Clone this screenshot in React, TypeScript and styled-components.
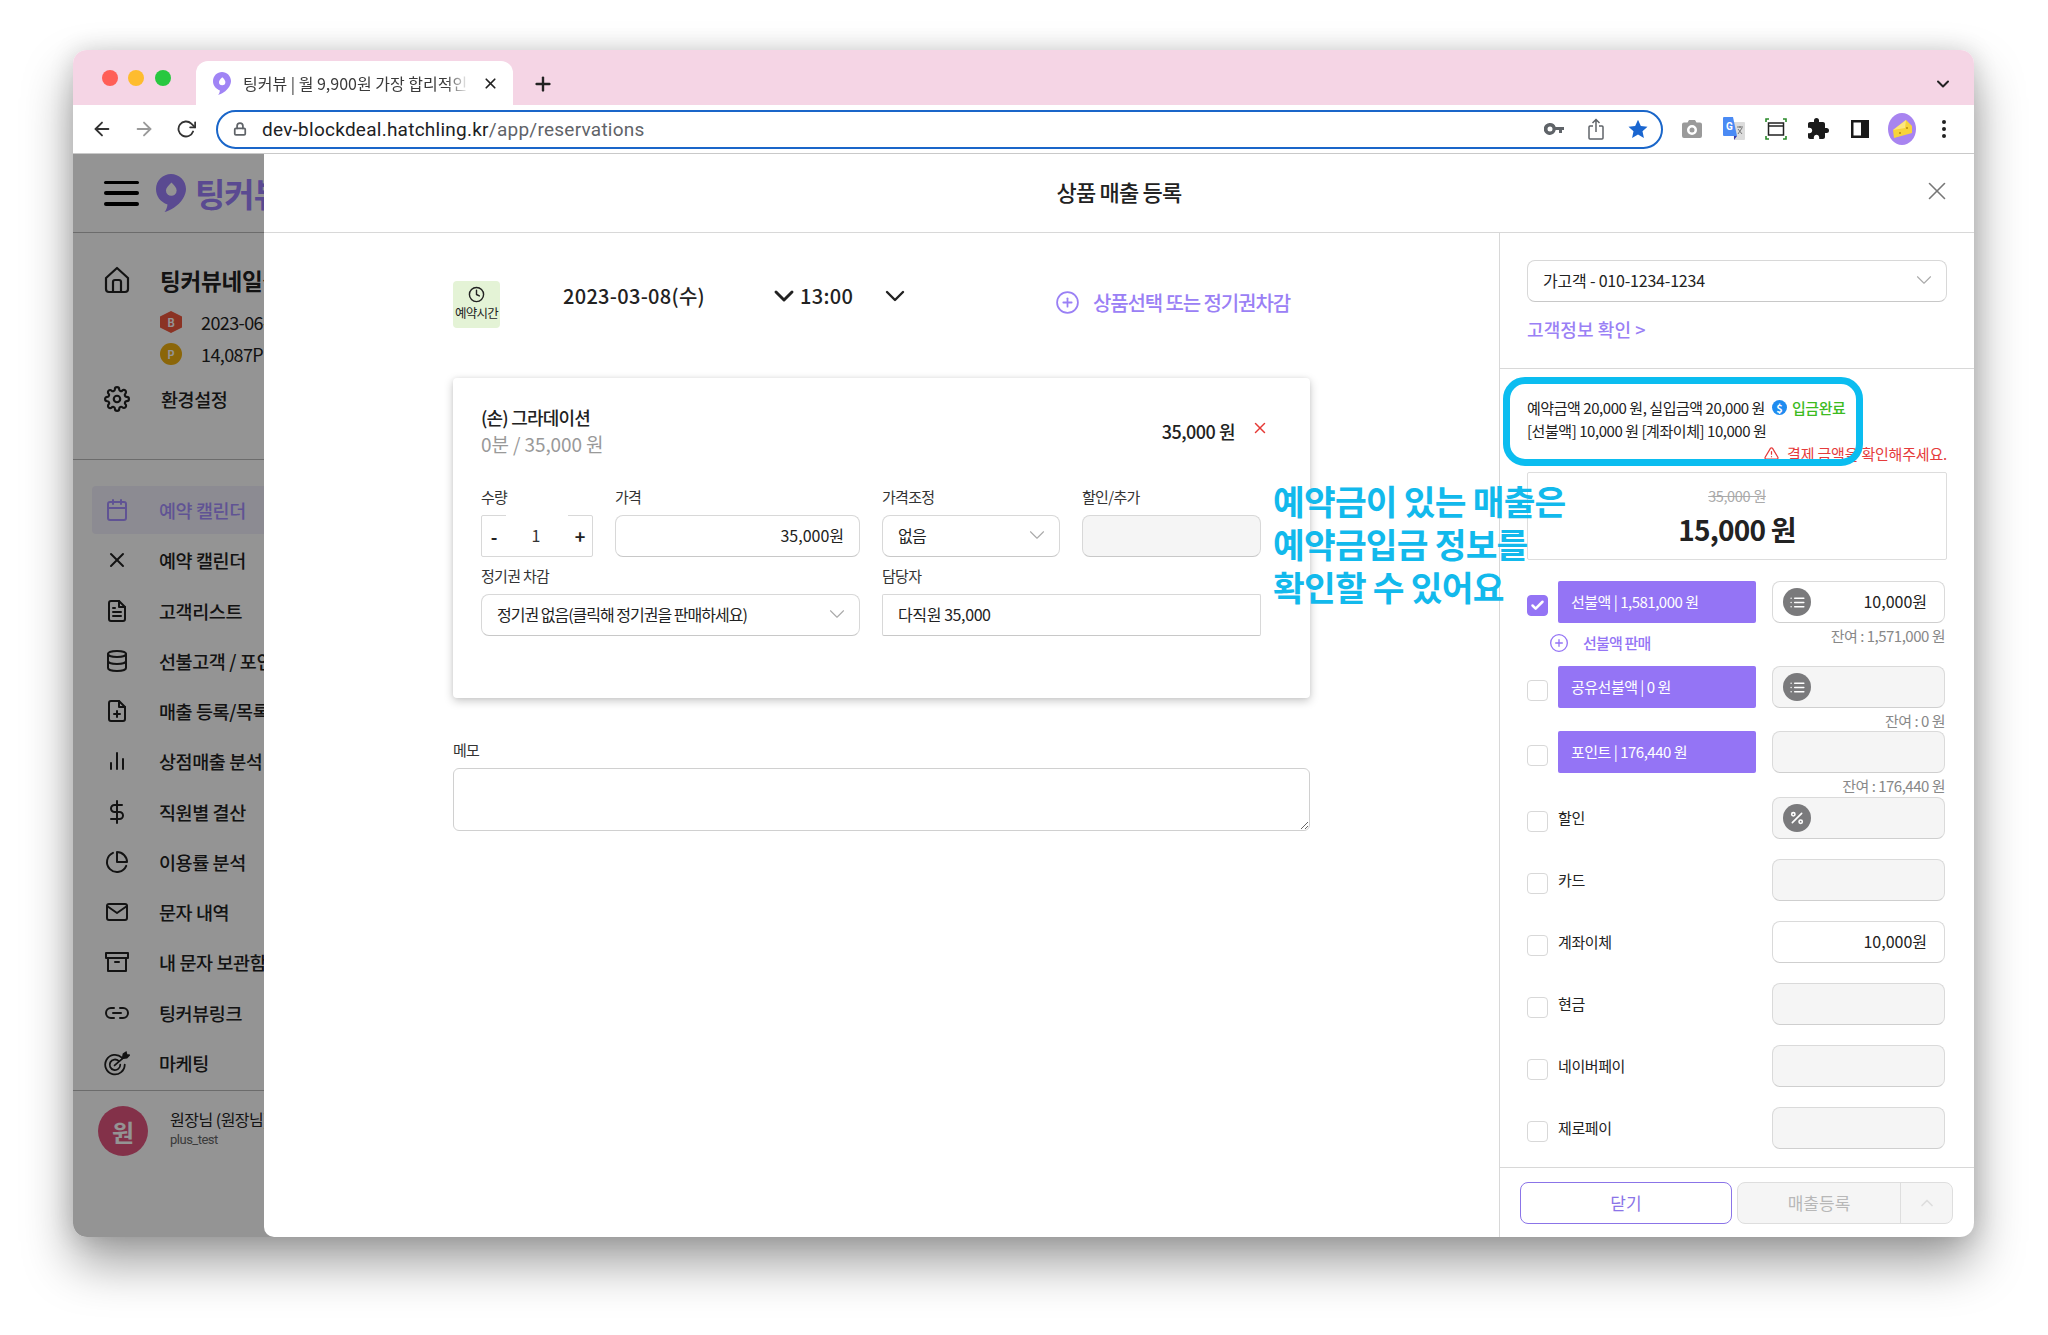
import React from 'react';
import styled, { createGlobalStyle } from 'styled-components';
import { FiCalendar, FiX, FiFileText, FiDatabase, FiFilePlus, FiBarChart2, FiDollarSign, FiPieChart, FiMail, FiArchive, FiLink2, FiSettings, FiArrowLeft, FiArrowRight, FiRotateCw, FiLock, FiChevronDown, FiChevronUp, FiPlus, FiPlusCircle, FiClock, FiList, FiPercent, FiCheck, FiAlertTriangle } from 'react-icons/fi';
import { MdExtension } from 'react-icons/md';

const SANS = `"Noto Sans CJK KR", "Noto Sans", sans-serif`;

const Global = createGlobalStyle`
  html, body { margin: 0; padding: 0; background: #fff; }
  body { font-family: ${SANS}; color: #222; }
  * { box-sizing: border-box; }
`;

const Page = styled.div`
  width: 2048px;
  height: 1335px;
  padding: 50px 74px 98px 73px;
  overflow: hidden;
`;
const BrowserWindow = styled.div`
  height: 100%;
  display: flex;
  flex-direction: column;
  border-radius: 14px;
  overflow: hidden;
  box-shadow: 0 26px 50px rgba(0,0,0,.38), 0 0 24px rgba(0,0,0,.14);
`;
const TabStrip = styled.div`
  height: 55px;
  flex: none;
  display: flex;
  align-items: flex-end;
  background: #f5d5e5;
  position: relative;
`;
const Lights = styled.div`
  width: 123px;
  height: 100%;
  display: flex;
  gap: 10.5px;
  padding: 20px 0 0 28.5px;
`;
const Light = styled.span<{ $c: string }>`
  width: 16px;
  height: 16px;
  border-radius: 50%;
  background: ${p => p.$c};
`;
const Tab = styled.div`
  width: 317px;
  height: 44px;
  background: #fff;
  border-radius: 12px 12px 0 0;
  display: flex;
  align-items: center;
  padding: 0 13px 0 17px;
  font-size: 16px;
  color: #3a3a3a;
`;
const TabTitle = styled.span`
  margin-left: 12px;
  width: 226px;
  overflow: hidden;
  white-space: nowrap;
  -webkit-mask-image: linear-gradient(90deg, #000 90%, transparent);
  mask-image: linear-gradient(90deg, #000 90%, transparent);
`;
const TabClose = styled.span`
  margin-left: 13px;
  display: flex;
  color: #222;
`;
const NewTab = styled.span`
  margin: 0 0 10px 19px;
  display: flex;
  color: #222;
`;
const TabMenu = styled.span`
  margin: 0 21px 11px auto;
  display: flex;
  color: #222;
`;
const Toolbar = styled.div`
  height: 49px;
  flex: none;
  display: flex;
  align-items: center;
  padding-left: 8px;
  background: #fff;
  border-bottom: 1px solid #c9c9c9;
`;
const ToolSlot = styled.span<{ $c?: string }>`
  width: 42px;
  height: 34px;
  flex: none;
  display: flex;
  align-items: center;
  justify-content: center;
  color: ${p => p.$c ?? '#333'};
`;
const UrlBar = styled.div`
  width: 1447px;
  height: 39px;
  margin: 0 8px 0 9px;
  flex: none;
  border: 2.5px solid #1a66c9;
  border-radius: 20px;
  display: flex;
  align-items: center;
  padding: 0 2px 0 15px;
`;
const LockSlot = styled.span`
  width: 29px;
  display: flex;
  color: #5f6368;
`;
const UrlText = styled.span`
  flex: 1;
  font-family: Roboto, sans-serif;
  font-size: 19px;
  color: #202124;
  letter-spacing: 0.25px;
  white-space: nowrap;
`;
const UrlPath = styled.span`
  color: #5f6368;
`;
const Content = styled.div`
  flex: 1;
  min-height: 0;
  position: relative;
  background: #fff;
`;
const Sidebar = styled.aside`
  width: 191px;
  height: 100%;
  overflow: hidden;
  white-space: nowrap;
`;
const SideTop = styled.div`
  height: 79px;
  display: flex;
  align-items: center;
  padding-left: 31px;
  border-bottom: 1px solid #bbb;
`;
const Burger = styled.div`
  width: 35px;
  height: 25px;
  flex: none;
  display: flex;
  flex-direction: column;
  justify-content: space-between;
  & > span { height: 3.5px; background: #000; border-radius: 2px; }
`;
const LogoMark = styled.span`
  margin-left: 17px;
  flex: none;
  display: flex;
`;
const LogoText = styled.span`
  margin-left: 9px;
  font-size: 33px;
  font-weight: 700;
  letter-spacing: -1px;
  color: #9b80fa;
`;
const Profile = styled.div`
  height: 227px;
  padding-top: 33px;
  border-bottom: 1px solid #bbb;
`;
const ProfileRow = styled.div<{ $h: number; $mt?: number }>`
  height: ${p => p.$h}px;
  margin-top: ${p => p.$mt ?? 0}px;
  display: flex;
  align-items: center;
  padding-left: 31px;
`;
const IconCell = styled.span`
  width: 26px;
  flex: none;
  display: flex;
  justify-content: center;
`;
const ShopName = styled.span`
  margin-left: 30px;
  font-size: 22.5px;
  font-weight: 700;
  letter-spacing: -0.2px;
`;
const Badge = styled.span<{ $c: string; $round?: boolean }>`
  width: 22px;
  height: 22px;
  margin-left: 56px;
  flex: none;
  display: flex;
  align-items: center;
  justify-content: center;
  border-radius: ${p => p.$round ? '50%' : '0'};
  clip-path: ${p => p.$round ? 'none' : 'polygon(50% 0, 100% 25%, 100% 75%, 50% 100%, 0 75%, 0 25%)'};
  background: ${p => p.$c};
  color: #fff;
  font-size: 11px;
  font-weight: 700;
`;
const BadgeText = styled.span`
  margin-left: 19px;
  font-size: 18px;
  letter-spacing: -0.6px;
`;
const PlainText = styled.span`
  margin-left: 31px;
  font-size: 18.5px;
  font-weight: 500;
  letter-spacing: -0.4px;
`;
const Nav = styled.nav`
  height: 630px;
  margin-left: 19px;
  padding-top: 26px;
  display: flex;
  flex-direction: column;
  gap: 2.27px;
`;
const NavItem = styled.div<{ $active?: boolean }>`
  height: 48px;
  flex: none;
  display: flex;
  align-items: center;
  padding-left: 12px;
  border-radius: 4px 0 0 4px;
  background: ${p => p.$active ? '#f2f0fc' : 'transparent'};
  color: ${p => p.$active ? '#a590ff' : '#222'};
  font-size: 18.5px;
  font-weight: 500;
  letter-spacing: -0.4px;
`;
const NavLabel = styled.span`
  margin-left: 29px;
`;
const UserBox = styled.div`
  border-top: 1px solid #bbb;
  padding: 15px 0 0 25px;
  display: flex;
`;
const Avatar = styled.div`
  width: 50px;
  height: 50px;
  flex: none;
  border-radius: 50%;
  background: #e2557f;
  color: #fff;
  font-size: 24px;
  font-weight: 700;
  display: flex;
  align-items: center;
  justify-content: center;
`;
const UserText = styled.div`
  margin-left: 22px;
  padding-top: 2px;
  font-size: 16px;
  line-height: 23px;
  letter-spacing: -0.5px;
`;
const UserSub = styled.div`
  font-family: Roboto, sans-serif;
  font-size: 13px;
  line-height: 18px;
  color: #666;
`;
const Backdrop = styled.div`
  position: absolute;
  inset: 0;
  background: rgba(0,0,0,.42);
`;
const Modal = styled.div`
  position: absolute;
  top: 0;
  left: 191px;
  right: 0;
  bottom: 0;
  background: #fff;
  display: flex;
  flex-direction: column;
  border-radius: 0 0 0 10px;
`;
const ModalHeader = styled.header`
  height: 79px;
  flex: none;
  padding-bottom: 4px;
  border-bottom: 1px solid #d8d8d8;
  display: flex;
  align-items: center;
  justify-content: center;
  position: relative;
  font-size: 22px;
  font-weight: 500;
  letter-spacing: -0.8px;
  color: #222;
`;
const ModalClose = styled.span`
  position: absolute;
  top: 22px;
  right: 22px;
  display: flex;
  color: #777;
`;
const ModalBody = styled.div`
  flex: 1;
  min-height: 0;
  display: flex;
`;
const MainPanel = styled.main`
  width: 1235px;
  flex: none;
  padding: 48px 189px 0 189px;
`;
const TimeRow = styled.div`
  height: 47px;
  display: flex;
  align-items: flex-start;
`;
const TimeBadge = styled.div`
  width: 47px;
  height: 47px;
  flex: none;
  background: #e4f3d6;
  border-radius: 4px;
  display: flex;
  flex-direction: column;
  align-items: center;
  padding-top: 5px;
  gap: 2px;
  font-size: 12.5px;
  line-height: 16px;
  letter-spacing: -0.7px;
  white-space: nowrap;
  color: #222;
`;
const DateText = styled.span<{ $ml: number }>`
  margin-left: ${p => p.$ml}px;
  font-size: 20px;
  font-weight: 500;
  line-height: 30px;
  letter-spacing: 0.3px;
  color: #222;
`;
const Chevron = styled.span<{ $ml: number }>`
  margin-left: ${p => p.$ml}px;
  height: 30px;
  display: flex;
  align-items: center;
  color: #222;
`;
const AddLink = styled.div`
  margin-left: auto;
  padding: 0 20px 0 0;
  height: 42px;
  display: flex;
  align-items: center;
  gap: 13px;
  color: #9a80f5;
  font-size: 20px;
  font-weight: 500;
  letter-spacing: -1.1px;
  white-space: nowrap;
`;
const ItemCard = styled.section`
  height: 320px;
  margin-top: 50px;
  padding: 26px 49px 0 28px;
  background: #fff;
  border-radius: 4px;
  box-shadow: 0 3px 10px rgba(0,0,0,.22), 0 0 4px rgba(0,0,0,.06);
`;
const ItemHead = styled.div`
  height: 84px;
  display: flex;
  align-items: flex-start;
`;
const ItemTitle = styled.div`
  font-size: 18px;
  font-weight: 500;
  line-height: 26px;
  letter-spacing: -0.8px;
`;
const ItemSub = styled.div`
  font-size: 19px;
  line-height: 28px;
  letter-spacing: -0.1px;
  color: #999;
`;
const ItemPrice = styled.div`
  margin: 14px 0 0 auto;
  font-size: 18px;
  line-height: 26px;
  font-weight: 500;
  letter-spacing: -0.5px;
`;
const ItemRemove = styled.span`
  margin: 15px -8px 0 16px;
  display: flex;
  color: #e53935;
`;
const FieldGrid = styled.div`
  display: grid;
  grid-template-columns: 112px 245px 178px 179px;
  column-gap: 22px;
  row-gap: 10px;
`;
const Field = styled.div<{ $wide?: boolean }>`
  grid-column: ${p => p.$wide ? 'span 2' : 'auto'};
  display: flex;
  flex-direction: column;
  gap: 7px;
`;
const FieldLabel = styled.div`
  height: 20px;
  font-size: 15px;
  line-height: 18px;
  letter-spacing: -0.7px;
  color: #333;
`;
const TextBox = styled.div<{ $align?: string; $off?: boolean; $square?: boolean; $ls?: number }>`
  height: 42px;
  display: flex;
  align-items: center;
  justify-content: ${p => p.$align ?? 'flex-start'};
  padding: 0 15px 2px;
  border: 1px solid #d8d8d8;
  border-bottom-color: #c8c8c8;
  border-radius: ${p => p.$square ? '2px' : '8px'};
  background: ${p => p.$off ? '#f5f5f5' : '#fff'};
  font-size: 16px;
  letter-spacing: ${p => p.$ls ?? -0.6}px;
  color: #222;
  white-space: nowrap;
`;
const SelectArrow = styled.span`
  margin: 0 -6px 0 auto;
  display: flex;
  color: #aaa;
`;
const Stepper = styled.div`
  height: 42px;
  display: flex;
  align-items: center;
  border: 1px solid #d8d8d8;
  border-radius: 2px;
`;
const StepBtn = styled.span`
  width: 24px;
  flex: none;
  display: flex;
  justify-content: center;
  font-size: 18px;
  font-weight: 700;
  color: #222;
`;
const StepValue = styled.span`
  flex: 1;
  height: 42px;
  margin-top: -2px;
  padding-right: 2px;
  background: #fff;
  display: flex;
  align-items: center;
  justify-content: center;
  font-size: 16px;
  color: #333;
`;
const MemoLabel = styled.div`
  margin-top: 43px;
  height: 20px;
  font-size: 15px;
  line-height: 18px;
  letter-spacing: -0.7px;
  color: #333;
`;
const MemoBox = styled.textarea`
  display: block;
  width: 100%;
  height: 63px;
  margin-top: 7px;
  border: 1px solid #d0d0d0;
  border-radius: 6px;
  outline: none;
  background: #fff;
  resize: vertical;
`;
const SidePanel = styled.div`
  flex: 1;
  min-width: 0;
  display: flex;
  flex-direction: column;
  border-left: 1px solid #d8d8d8;
  position: relative;
`;
const CustomerBox = styled.div`
  height: 136px;
  flex: none;
  padding: 27px 27px 0 27px;
  border-bottom: 1px solid #d8d8d8;
`;
const CustomerLink = styled.div`
  margin-top: 15px;
  font-size: 18px;
  line-height: 24px;
  letter-spacing: 0.1px;
  color: #9a80f5;
  font-weight: 500;
`;
const PaySection = styled.div`
  flex: 1;
  min-height: 0;
  padding: 28px 28px 0 27px;
`;
const InfoLine = styled.div`
  height: 23px;
  display: flex;
  align-items: center;
  padding-bottom: 2px;
  font-size: 15px;
  letter-spacing: -0.45px;
  color: #222;
  white-space: nowrap;
`;
const PaidIcon = styled.span`
  width: 15px;
  height: 15px;
  margin: 0 5px 0 7px;
  border-radius: 50%;
  background: #1f8cf0;
  color: #fff;
  font-size: 11px;
  font-weight: 700;
  display: flex;
  align-items: center;
  justify-content: center;
  letter-spacing: 0;
`;
const PaidText = styled.span`
  color: #3dbb1f;
  font-weight: 500;
`;
const WarnLine = styled.div`
  height: 20px;
  margin-right: -1px;
  display: flex;
  align-items: center;
  justify-content: flex-end;
  gap: 8px;
  font-size: 15px;
  letter-spacing: -0.2px;
  color: #e53b3b;
`;
const TotalBox = styled.div`
  height: 88px;
  margin: 9px -1px 0 0;
  border: 1px solid #ddd;
  border-radius: 2px;
  display: flex;
  flex-direction: column;
  align-items: center;
`;
const OldPrice = styled.div`
  margin-top: 11px;
  font-size: 14.5px;
  line-height: 24px;
  letter-spacing: -0.4px;
  text-decoration: line-through;
  color: #aaa;
`;
const NewPrice = styled.div`
  font-size: 28px;
  line-height: 42px;
  font-weight: 700;
  letter-spacing: -0.8px;
  color: #222;
`;
const PayList = styled.div`
  margin-top: 21px;
  display: flex;
  flex-direction: column;
  align-items: stretch;
`;
const PayRow = styled.div`
  height: 42px;
  flex: none;
  display: grid;
  grid-template-columns: 21px 198px 173px;
  column-gap: 10px;
  align-items: center;
  & > :last-child { margin-left: 6px; }
`;
const Check = styled.span<{ $on?: boolean }>`
  width: 21px;
  height: 21px;
  margin-top: 7px;
  border-radius: 4px;
  border: 1px solid ${p => p.$on ? '#9474f5' : '#d8d8d8'};
  background: ${p => p.$on ? '#9474f5' : '#fff'};
  color: #fff;
  display: flex;
  align-items: center;
  justify-content: center;
`;
const WalletBtn = styled.div`
  height: 42px;
  border-radius: 2px;
  background: #9474f5;
  color: #fff;
  display: flex;
  align-items: center;
  padding: 0 0 2px 13px;
  font-size: 15px;
  letter-spacing: -0.5px;
  white-space: nowrap;
`;
const RowLabel = styled.div`
  padding-bottom: 2px;
  font-size: 15px;
  letter-spacing: -0.4px;
  color: #222;
`;
const AmountBox = styled.div<{ $off?: boolean }>`
  width: 173px;
  height: 42px;
  padding: 0 17px 0 10px;
  display: flex;
  align-items: center;
  justify-content: space-between;
  border: 1px solid #dadada;
  border-bottom-color: #cfcfcf;
  border-radius: 8px;
  background: ${p => p.$off ? '#f5f5f5' : '#fff'};
  font-size: 16px;
  color: #222;
`;
const AmountEnd = styled.span`
  margin-left: auto;
  padding-bottom: 2px;
`;
const RoundIcon = styled.span`
  width: 28px;
  height: 28px;
  border-radius: 50%;
  background: #7a7a7c;
  color: #fff;
  display: flex;
  align-items: center;
  justify-content: center;
`;
const SubRow = styled.div`
  height: 43px;
  flex: none;
  display: flex;
  align-items: flex-start;
  justify-content: space-between;
`;
const SellLink = styled.div`
  margin: 9px 0 0 22px;
  display: flex;
  align-items: center;
  gap: 14px;
  font-size: 15px;
  font-weight: 500;
  letter-spacing: -0.8px;
  color: #9474f5;
`;
const Remain = styled.div<{ $h?: number }>`
  height: ${p => p.$h ?? 23}px;
  margin: 0 1px 0 auto;
  font-size: 15px;
  line-height: 25px;
  letter-spacing: -0.5px;
  color: #888;
  white-space: nowrap;
`;
const PlainRows = styled.div`
  display: flex;
  flex-direction: column;
  gap: 20px;
`;
const ModalFooter = styled.footer`
  height: 70px;
  flex: none;
  padding: 14px 21px 0 20px;
  border-top: 1px solid #d8d8d8;
  display: flex;
  gap: 5px;
`;
const CloseBtn = styled.div`
  width: 212px;
  height: 42px;
  padding-bottom: 2px;
  border: 1.5px solid #8b74e8;
  border-radius: 8px;
  color: #8b74e8;
  display: flex;
  align-items: center;
  justify-content: center;
  font-size: 17px;
`;
const SubmitGroup = styled.div`
  flex: 1;
  height: 42px;
  display: flex;
  border: 1px solid #dedede;
  border-radius: 8px;
  background: #f5f5f5;
  color: #b8b8b8;
  font-size: 17px;
`;
const SubmitMain = styled.span`
  flex: 1;
  padding-bottom: 2px;
  display: flex;
  align-items: center;
  justify-content: center;
`;
const SubmitCaret = styled.span`
  width: 52px;
  display: flex;
  align-items: center;
  justify-content: center;
  color: #ddd;
  border-left: 1px solid #dedede;
`;
const CalloutFrame = styled.div`
  position: absolute;
  left: 3px;
  top: 144px;
  width: 360px;
  height: 89px;
  border: 7px solid #0bbdf0;
  border-radius: 22px;
  pointer-events: none;
`;
const CalloutText = styled.div`
  position: absolute;
  left: 1009px;
  top: 325px;
  font-size: 34.5px;
  line-height: 43px;
  font-weight: 700;
  letter-spacing: -0.8px;
  color: #12b9ec;
  white-space: nowrap;
`;

const Balloon = ({ w, h, c }: { w: number; h: number; c: string }) => (
  <svg width={w} height={h} viewBox="0 0 30 38" style={{ flex: 'none' }}>
    <path d="M15 0C7 0 0 6.500 0 15c0 7.500 4.500 13 11.500 15.500-.3 2.800-1.200 5.500-3 7.500 5-1 14-6 18.500-13.500 2-3.500 3-6.500 3-9.500C30 6.500 23 0 15 0z" fill={c} />
    <path d="M15.500 8.500c-3.200 3-5.500 5.500-5.500 8a5.300 5.300 0 0 0 10.600 0c0-2.500-2-5-5.100-8z" fill="#fff" />
  </svg>
);
const HomeIcon = () => (
  <svg width="26" height="28" viewBox="0 0 26 28" fill="none" stroke="#222" strokeWidth="2.200" strokeLinejoin="round">
    <path d="M2 12 13 2l11 10v11a3 3 0 0 1-3 3H5a3 3 0 0 1-3-3z" />
    <path d="M9 26V16a2 2 0 0 1 2-2h4a2 2 0 0 1 2 2v10" />
  </svg>
);
const TargetIcon = () => (
  <svg width="32" height="30" viewBox="0 0 32 30" fill="none" stroke="#222" strokeWidth="2.200" strokeLinecap="round">
    <path d="M22 8.500A12 12 0 1 0 25.500 17" />
    <path d="M18 12.500A6.500 6.500 0 1 0 20 17" />
    <path d="M13 18 27 6" />
    <path d="m23 9 1-5 3-2 .8 3 3 .5-2.800 3z" fill="#222" />
  </svg>
);
const KeyIcon = () => (
  <svg width="20" height="12" viewBox="0 0 20 12" fill="#5f6368">
    <path fillRule="evenodd" d="M6 0a6 6 0 0 1 5.700 4H20v3h-2v3h-3V7h-3.300A6 6 0 1 1 6 0zm0 3.500a2.500 2.500 0 1 0 0 5 2.500 2.500 0 0 0 0-5z" />
  </svg>
);
const ShareIcon = () => (
  <svg width="16" height="22" viewBox="0 0 16 22" fill="none" stroke="#5f6368" strokeWidth="1.500">
    <path d="M5 8H2a1 1 0 0 0-1 1v11a1 1 0 0 0 1 1h12a1 1 0 0 0 1-1V9a1 1 0 0 0-1-1h-3" />
    <path d="M8 14V1.500M4.500 5 8 1.500 11.500 5" />
  </svg>
);
const StarIcon = () => (
  <svg width="20" height="20" viewBox="0 0 24 24" fill="#1a66d0">
    <path d="M12 1l3.400 7.400 8 .9-6 5.400 1.700 8L12 18.600 4.900 22.700l1.700-8-6-5.400 8-.9z" />
  </svg>
);
const CameraIcon = () => (
  <svg width="20" height="18" viewBox="0 0 20 18" fill="#9a9a9a">
    <path fillRule="evenodd" d="M7 0h6l1.500 2.500H18a2 2 0 0 1 2 2V16a2 2 0 0 1-2 2H2a2 2 0 0 1-2-2V4.500a2 2 0 0 1 2-2h3.500zM10 5a5 5 0 1 0 0 10 5 5 0 0 0 0-10zm0 2.500a2.500 2.500 0 1 1 0 5 2.500 2.500 0 0 1 0-5z" />
  </svg>
);
const TranslateIcon = () => (
  <svg width="22" height="24" viewBox="0 0 22 24">
    <path d="M9 5h12a1 1 0 0 1 1 1v16a1 1 0 0 1-1 1H11z" fill="#dcdcdc" />
    <path d="M14 10h6M17 9v2M15 17l4-6M15 12l4 5" stroke="#777" strokeWidth="1" fill="none" />
    <path d="M1 0h9l4 19H1a1 1 0 0 1-1-1V1a1 1 0 0 1 1-1z" fill="#4a8af4" />
    <path d="M11 19h3l-3 4z" fill="#3b3ba8" />
    <text x="3" y="13" fontSize="10" fontWeight="700" fill="#fff" fontFamily="Roboto, sans-serif">G</text>
  </svg>
);
const CaptureIcon = () => (
  <svg width="22" height="22" viewBox="0 0 22 22" fill="none">
    <path d="M1 4V1h3M18 1h3v3M1 18v3h3M18 21h3v-3" stroke="#2a8a2a" strokeWidth="1.600" />
    <rect x="3.500" y="5" width="15" height="12" stroke="#222" strokeWidth="1.500" />
    <path d="M3.500 8h15" stroke="#222" strokeWidth="1.500" />
  </svg>
);
const PanelIcon = () => (
  <svg width="18" height="18" viewBox="0 0 18 18">
    <path fillRule="evenodd" d="M0 0h18v18H0zM2.500 2.500v13H10v-13z" fill="#1a1a1a" />
  </svg>
);
const ProfileIcon = () => (
  <svg width="28" height="32" viewBox="0 0 28 32">
    <ellipse cx="14" cy="16" rx="14" ry="16" fill="#a884f0" />
    <path d="M5 17 18 7l6 6v7L6 25z" fill="#f7d43a" />
    <path d="M18 7l-1 8-12 2z" fill="#fce67e" />
    <circle cx="12" cy="20" r="1" fill="#b88a10" />
    <circle cx="19" cy="15" r="1" fill="#b88a10" />
  </svg>
);
const DotsIcon = () => (
  <svg width="6" height="20" viewBox="0 0 6 20" fill="#222">
    <circle cx="3" cy="3" r="2" />
    <circle cx="3" cy="10" r="2" />
    <circle cx="3" cy="17" r="2" />
  </svg>
);

const nav = [
  { icon: <FiCalendar size={24} />, label: '예약 캘린더', active: true },
  { icon: <FiX size={24} />, label: '예약 캘린더' },
  { icon: <FiFileText size={24} />, label: '고객리스트' },
  { icon: <FiDatabase size={24} />, label: '선불고객 / 포인트' },
  { icon: <FiFilePlus size={24} />, label: '매출 등록/목록' },
  { icon: <FiBarChart2 size={24} />, label: '상점매출 분석' },
  { icon: <FiDollarSign size={24} />, label: '직원별 결산' },
  { icon: <FiPieChart size={24} />, label: '이용률 분석' },
  { icon: <FiMail size={24} />, label: '문자 내역' },
  { icon: <FiArchive size={24} />, label: '내 문자 보관함' },
  { icon: <FiLink2 size={24} />, label: '팅커뷰링크' },
  { icon: <TargetIcon />, label: '마케팅' },
];

const plainMethods: { label: string; amount?: string; percent?: boolean }[] = [
  { label: '할인', percent: true },
  { label: '카드' },
  { label: '계좌이체', amount: '10,000원' },
  { label: '현금' },
  { label: '네이버페이' },
  { label: '제로페이' },
];

export default function App() {
  return (
    <Page>
      <Global />
      <BrowserWindow>
        <TabStrip>
          <Lights>
            <Light $c="#ff5f57" />
            <Light $c="#febc2e" />
            <Light $c="#28c840" />
          </Lights>
          <Tab>
            <Balloon w={18} h={23} c="#a084f5" />
            <TabTitle>팅커뷰 | 월 9,900원 가장 합리적인 예약관리</TabTitle>
            <TabClose><FiX size={17} strokeWidth={2.4} /></TabClose>
          </Tab>
          <NewTab><FiPlus size={22} strokeWidth={2.6} /></NewTab>
          <TabMenu><FiChevronDown size={20} strokeWidth={2.4} /></TabMenu>
        </TabStrip>
        <Toolbar>
          <ToolSlot><FiArrowLeft size={22} /></ToolSlot>
          <ToolSlot $c="#9a9a9a"><FiArrowRight size={22} /></ToolSlot>
          <ToolSlot><FiRotateCw size={20} strokeWidth={2.2} /></ToolSlot>
          <UrlBar>
            <LockSlot><FiLock size={14} strokeWidth={3} /></LockSlot>
            <UrlText>dev-blockdeal.hatchling.kr<UrlPath>/app/reservations</UrlPath></UrlText>
            <ToolSlot><KeyIcon /></ToolSlot>
            <ToolSlot><ShareIcon /></ToolSlot>
            <ToolSlot><StarIcon /></ToolSlot>
          </UrlBar>
          <ToolSlot><CameraIcon /></ToolSlot>
          <ToolSlot><TranslateIcon /></ToolSlot>
          <ToolSlot><CaptureIcon /></ToolSlot>
          <ToolSlot $c="#1a1a1a"><MdExtension size={24} /></ToolSlot>
          <ToolSlot><PanelIcon /></ToolSlot>
          <ToolSlot><ProfileIcon /></ToolSlot>
          <ToolSlot><DotsIcon /></ToolSlot>
        </Toolbar>
        <Content>
          <Sidebar>
            <SideTop>
              <Burger><span /><span /><span /></Burger>
              <LogoMark><Balloon w={30} h={38} c="#9b80fa" /></LogoMark>
              <LogoText>팅커뷰</LogoText>
            </SideTop>
            <Profile>
              <ProfileRow $h={28}>
                <IconCell><HomeIcon /></IconCell>
                <ShopName>팅커뷰네일샵</ShopName>
              </ProfileRow>
              <ProfileRow $h={32} $mt={12}>
                <Badge $c="#f0583f">B</Badge>
                <BadgeText>2023-06-30</BadgeText>
              </ProfileRow>
              <ProfileRow $h={32}>
                <Badge $c="#f0b010" $round>P</Badge>
                <BadgeText>14,087P</BadgeText>
              </ProfileRow>
              <ProfileRow $h={32} $mt={13}>
                <IconCell><FiSettings size={28} /></IconCell>
                <PlainText>환경설정</PlainText>
              </ProfileRow>
            </Profile>
            <Nav>
              {nav.map((n, i) => (
                <NavItem key={i} $active={n.active}>
                  <IconCell>{n.icon}</IconCell>
                  <NavLabel>{n.label}</NavLabel>
                </NavItem>
              ))}
            </Nav>
            <UserBox>
              <Avatar>원</Avatar>
              <UserText>
                원장님 (원장님)
                <UserSub>plus_test</UserSub>
              </UserText>
            </UserBox>
          </Sidebar>
          <Backdrop />
          <Modal>
            <ModalHeader>
              상품 매출 등록
              <ModalClose><FiX size={30} strokeWidth={1.3} /></ModalClose>
            </ModalHeader>
            <ModalBody>
              <MainPanel>
                <TimeRow>
                  <TimeBadge>
                    <FiClock size={17} />
                    예약시간
                  </TimeBadge>
                  <DateText $ml={63}>2023-03-08(수)</DateText>
                  <Chevron $ml={63}><FiChevronDown size={32} strokeWidth={2.2} /></Chevron>
                  <DateText $ml={0}>13:00</DateText>
                  <Chevron $ml={26}><FiChevronDown size={32} strokeWidth={1.8} /></Chevron>
                  <AddLink>
                    <FiPlusCircle size={25} strokeWidth={1.7} />
                    상품선택 또는 정기권차감
                  </AddLink>
                </TimeRow>
                <ItemCard>
                  <ItemHead>
                    <div>
                      <ItemTitle>(손) 그라데이션</ItemTitle>
                      <ItemSub>0분 / 35,000 원</ItemSub>
                    </div>
                    <ItemPrice>35,000 원</ItemPrice>
                    <ItemRemove><FiX size={18} /></ItemRemove>
                  </ItemHead>
                  <FieldGrid>
                    <Field>
                      <FieldLabel>수량</FieldLabel>
                      <Stepper>
                        <StepBtn>-</StepBtn>
                        <StepValue>1</StepValue>
                        <StepBtn>+</StepBtn>
                      </Stepper>
                    </Field>
                    <Field>
                      <FieldLabel>가격</FieldLabel>
                      <TextBox $align="flex-end" $ls={0}>35,000원</TextBox>
                    </Field>
                    <Field>
                      <FieldLabel>가격조정</FieldLabel>
                      <TextBox>없음<SelectArrow><FiChevronDown size={26} strokeWidth={1} /></SelectArrow></TextBox>
                    </Field>
                    <Field>
                      <FieldLabel>할인/추가</FieldLabel>
                      <TextBox $off />
                    </Field>
                    <Field $wide>
                      <FieldLabel>정기권 차감</FieldLabel>
                      <TextBox $ls={-1}>정기권 없음(클릭해 정기권을 판매하세요)<SelectArrow><FiChevronDown size={26} strokeWidth={1} /></SelectArrow></TextBox>
                    </Field>
                    <Field $wide>
                      <FieldLabel>담당자</FieldLabel>
                      <TextBox $square $ls={-0.4}>다직원 35,000</TextBox>
                    </Field>
                  </FieldGrid>
                </ItemCard>
                <MemoLabel>메모</MemoLabel>
                <MemoBox />
              </MainPanel>
              <SidePanel>
                <CustomerBox>
                  <TextBox $ls={-0.2}>가고객 - 010-1234-1234<SelectArrow><FiChevronDown size={26} strokeWidth={1} /></SelectArrow></TextBox>
                  <CustomerLink>고객정보 확인 &gt;</CustomerLink>
                </CustomerBox>
                <PaySection>
                  <InfoLine>
                    예약금액 20,000 원, 실입금액 20,000 원
                    <PaidIcon>$</PaidIcon>
                    <PaidText>입금완료</PaidText>
                  </InfoLine>
                  <InfoLine>[선불액] 10,000 원 [계좌이체] 10,000 원</InfoLine>
                  <WarnLine>
                    <FiAlertTriangle size={15} />
                    결제 금액을 확인해주세요.
                  </WarnLine>
                  <TotalBox>
                    <OldPrice>35,000 원</OldPrice>
                    <NewPrice>15,000 원</NewPrice>
                  </TotalBox>
                  <PayList>
                    <PayRow>
                      <Check $on><FiCheck size={15} strokeWidth={4} /></Check>
                      <WalletBtn>선불액 | 1,581,000 원</WalletBtn>
                      <AmountBox>
                        <RoundIcon><FiList size={17} /></RoundIcon>
                        <AmountEnd>10,000원</AmountEnd>
                      </AmountBox>
                    </PayRow>
                    <SubRow>
                      <SellLink><FiPlusCircle size={20} strokeWidth={1.6} />선불액 판매</SellLink>
                      <Remain>잔여 : 1,571,000 원</Remain>
                    </SubRow>
                    <PayRow>
                      <Check />
                      <WalletBtn>공유선불액 | 0 원</WalletBtn>
                      <AmountBox $off>
                        <RoundIcon><FiList size={17} /></RoundIcon>
                      </AmountBox>
                    </PayRow>
                    <Remain>잔여 : 0 원</Remain>
                    <PayRow>
                      <Check />
                      <WalletBtn>포인트 | 176,440 원</WalletBtn>
                      <AmountBox $off />
                    </PayRow>
                    <Remain $h={24}>잔여 : 176,440 원</Remain>
                    <PlainRows>
                      {plainMethods.map(m => (
                        <PayRow key={m.label}>
                          <Check />
                          <RowLabel>{m.label}</RowLabel>
                          <AmountBox $off={!m.amount}>
                            {m.percent && <RoundIcon><FiPercent size={16} strokeWidth={2.4} /></RoundIcon>}
                            {m.amount && <AmountEnd>{m.amount}</AmountEnd>}
                          </AmountBox>
                        </PayRow>
                      ))}
                    </PlainRows>
                  </PayList>
                </PaySection>
                <ModalFooter>
                  <CloseBtn>닫기</CloseBtn>
                  <SubmitGroup>
                    <SubmitMain>매출등록</SubmitMain>
                    <SubmitCaret><FiChevronUp size={20} /></SubmitCaret>
                  </SubmitGroup>
                </ModalFooter>
                <CalloutFrame />
              </SidePanel>
            </ModalBody>
            <CalloutText>
              예약금이 있는 매출은<br />
              예약금입금 정보를<br />
              확인할 수 있어요
            </CalloutText>
          </Modal>
        </Content>
      </BrowserWindow>
    </Page>
  );
}
